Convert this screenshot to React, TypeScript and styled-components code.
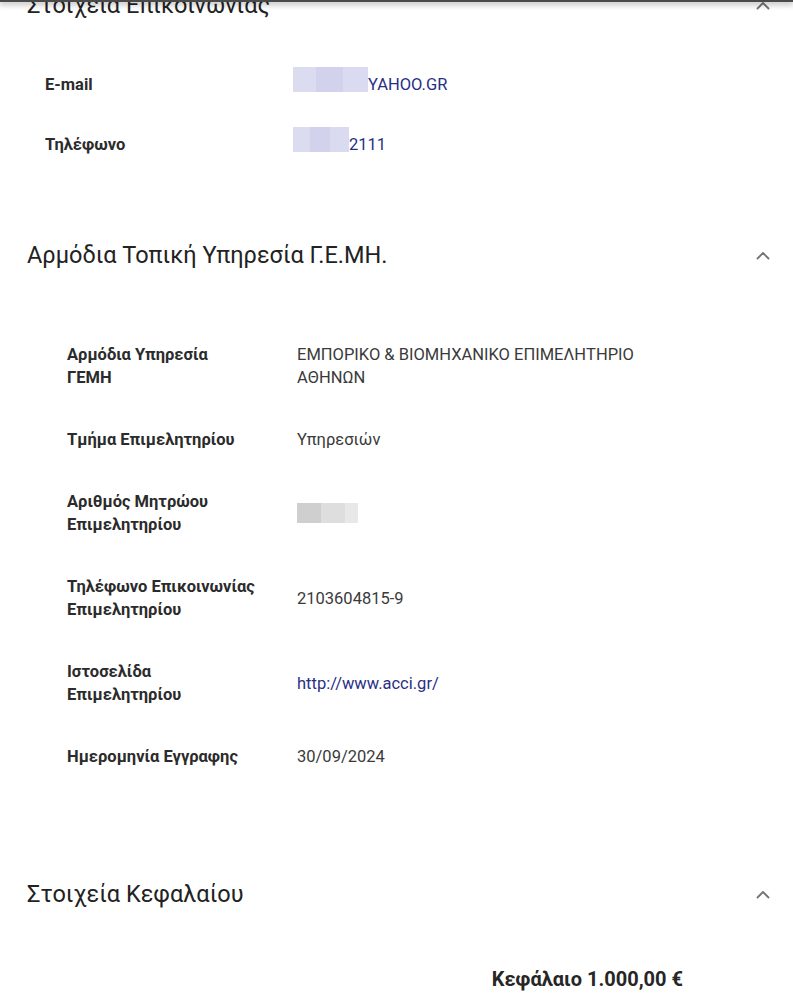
import React from "react";
import styled, { createGlobalStyle } from "styled-components";

const GlobalStyle = createGlobalStyle`
  html, body {
    margin: 0;
    padding: 0;
    background: #ffffff;
  }
  body {
    font-family: Roboto, "Noto Sans", "Liberation Sans", sans-serif;
    color: #2e2e2e;
    overflow: hidden;
  }
`;

const Page = styled.div`
  margin-top: -23px;
  width: 793px;
`;

// shadow of the app bar that sits above the scrolled content
const TopShade = styled.div`
  position: fixed;
  top: 0;
  left: 0;
  right: 0;
  height: 2px;
  background: #4a4a4a;
  box-shadow: 0 1px 6px 1px rgba(0, 0, 0, 0.35);
  z-index: 5;
`;

const Section = styled.section``;

const Header = styled.div`
  height: 56px;
  display: flex;
  align-items: center;
  justify-content: space-between;
  padding: 0 23px 0 27px;
`;

const Title = styled.h2`
  margin: 0;
  font-size: 23.5px;
  font-weight: 400;
  color: #222222;
`;

const Body = styled.div<{ $top: number; $bottom: number; $indent: number }>`
  padding: ${(p) => p.$top}px 0 ${(p) => p.$bottom}px ${(p) => p.$indent}px;
`;

const Table = styled.div<{ $label: number; $gap: number; $rowGap: number }>`
  display: grid;
  grid-template-columns: ${(p) => p.$label}px 380px;
  column-gap: ${(p) => p.$gap}px;
  row-gap: ${(p) => p.$rowGap}px;
  align-items: center;
  font-size: 16.5px;
  line-height: 23px;
`;

const Label = styled.div`
  font-weight: 700;
  color: #2b2b2b;
  white-space: pre-line;
`;

const Value = styled.div<{ $link?: boolean }>`
  color: ${(p) => (p.$link ? "#2a2f86" : "#3a3a3a")};
  display: flex;
  align-items: center;
`;

const Blur = styled.span<{ $w: number; $tone: "violet" | "grey" }>`
  display: inline-block;
  flex-shrink: 0;
  width: ${(p) => p.$w}px;
  height: ${(p) => (p.$tone === "grey" ? 20 : 25)}px;
  margin-top: ${(p) => (p.$tone === "grey" ? 0 : -10)}px;
  background: ${(p) =>
    p.$tone === "grey"
      ? "linear-gradient(90deg, #cfcfcf 0 40%, #dedede 40% 78%, #e8e8e8 78%)"
      : "linear-gradient(90deg, #dcdcf1 0 30%, #d2d2ec 30% 66%, #dadaf0 66%)"};
`;

const Capital = styled.div`
  display: flex;
  justify-content: flex-end;
  padding: 45px 110px 0 0;
  font-size: 20px;
  line-height: 24px;
  font-weight: 700;
  color: #262626;
`;

const Chevron: React.FC = () => (
  <svg width="14" height="9" viewBox="0 0 14 9" fill="none">
    <polyline
      points="1.5,7.5 7,2 12.5,7.5"
      stroke="#747474"
      strokeWidth="1.8"
      strokeLinecap="round"
      strokeLinejoin="round"
    />
  </svg>
);

const chamberRows: { label: string; value: React.ReactNode; link?: boolean }[] = [
  { label: "Αρμόδια Υπηρεσία\nΓΕΜΗ", value: "ΕΜΠΟΡΙΚΟ & ΒΙΟΜΗΧΑΝΙΚΟ ΕΠΙΜΕΛΗΤΗΡΙΟ ΑΘΗΝΩΝ" },
  { label: "Τμήμα Επιμελητηρίου", value: "Υπηρεσιών" },
  { label: "Αριθμός Μητρώου Επιμελητηρίου", value: <Blur $w={61} $tone="grey" /> },
  { label: "Τηλέφωνο Επικοινωνίας Επιμελητηρίου", value: "2103604815-9" },
  { label: "Ιστοσελίδα Επιμελητηρίου", value: "http://www.acci.gr/", link: true },
  { label: "Ημερομηνία Εγγραφης", value: "30/09/2024" },
];

const App: React.FC = () => (
  <>
    <GlobalStyle />
    <TopShade />
    <Page>
      <Section>
        <Header>
          <Title>Στοιχεία Επικοινωνίας</Title>
          <Chevron />
        </Header>
        <Body $top={40} $bottom={71} $indent={45}>
          <Table $label={200} $gap={48} $rowGap={37}>
            <Label>E-mail</Label>
            <Value $link>
              <Blur $w={75} $tone="violet" />
              YAHOO.GR
            </Value>
            <Label>Τηλέφωνο</Label>
            <Value $link>
              <Blur $w={56} $tone="violet" />
              2111
            </Value>
          </Table>
        </Body>
      </Section>

      <Section>
        <Header>
          <Title>Αρμόδια Τοπική Υπηρεσία Γ.Ε.ΜΗ.</Title>
          <Chevron />
        </Header>
        <Body $top={60} $bottom={98} $indent={67}>
          <Table $label={195} $gap={35} $rowGap={39}>
            {chamberRows.map((r) => (
              <React.Fragment key={r.label}>
                <Label>{r.label}</Label>
                <Value $link={r.link}>{r.value}</Value>
              </React.Fragment>
            ))}
          </Table>
        </Body>
      </Section>

      <Section>
        <Header>
          <Title>Στοιχεία Κεφαλαίου</Title>
          <Chevron />
        </Header>
        <Capital>Κεφάλαιο 1.000,00 €</Capital>
      </Section>
    </Page>
  </>
);

export default App;
